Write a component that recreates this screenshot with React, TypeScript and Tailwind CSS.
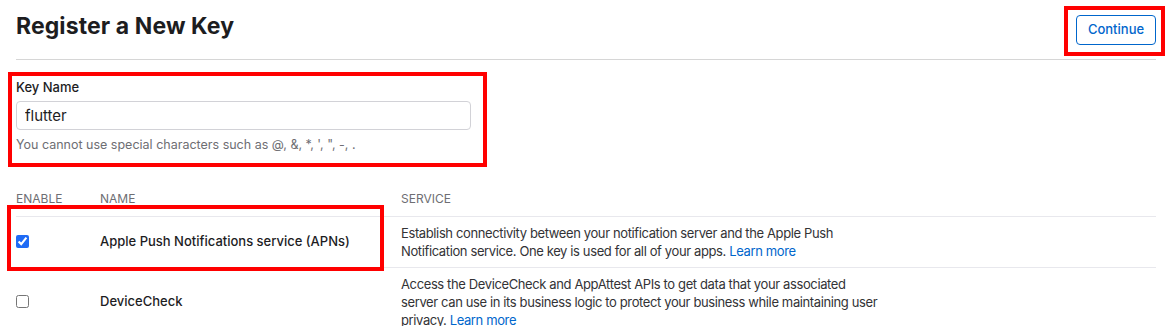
import { useState } from 'react';

const services = [
  {
    id: 'apns',
    name: 'Apple Push Notifications service (APNs)',
    description: 'Establish connectivity between your notification server and the Apple Push Notification service. One key is used for all of your apps.',
    enabled: true,
  },
  {
    id: 'devicecheck',
    name: 'DeviceCheck',
    description: 'Access the DeviceCheck and AppAttest APIs to get data that your associated server can use in its business logic to protect your business while maintaining user privacy.',
    enabled: false,
  },
];

export default function App() {
  const [keyName, setKeyName] = useState('flutter');
  const [enabled, setEnabled] = useState<Record<string, boolean>>(
    Object.fromEntries(services.map(s => [s.id, s.enabled]))
  );

  return (
    <div className="relative w-[1172px] h-[326px] overflow-hidden bg-white px-4 font-['Inter','Liberation_Sans',sans-serif] text-[#1d1d1f]">
      {/* Header */}
      <div className="flex justify-between items-start h-[59px] border-b border-[#d6d6d6] box-content">
        <h1 className="pt-[12px] text-[23px] leading-[28px] font-bold tracking-[0.1px]">Register a New Key</h1>
        <button className="mt-[15px] h-[30px] w-[80px] rounded-[4px] border border-[#0066cc] text-[13px] font-medium text-[#0066cc]">
          Continue
        </button>
      </div>

      {/* Key name */}
      <div className="pt-[19px]">
        <label className="block text-[13px] leading-[16px] font-medium">Key Name</label>
        <input
          value={keyName}
          onChange={e => setKeyName(e.target.value)}
          className="mt-[6px] block h-[29px] w-[455px] rounded-[4px] border border-[#d2d2d7] px-[8px] text-[15px] outline-none"
        />
        <p className="mt-[7px] text-[12.5px] leading-[16px] text-[#6e6e73]">
          You cannot use special characters such as @, &amp;, *, ', ", -, .
        </p>
      </div>

      {/* Services table */}
      <div className="mt-[38px]">
        <div className="grid grid-cols-[84px_301px_1fr] pb-[9px] text-[12px] leading-[16px] uppercase text-[#6e6e73] border-b border-[#e8e8ed]">
          <div>Enable</div>
          <div>Name</div>
          <div>Service</div>
        </div>
        {services.map(s => (
          <div key={s.id} className="grid grid-cols-[84px_301px_1fr] items-center border-b border-[#e8e8ed] py-[7px]">
            <div className="flex items-center">
              <input
                type="checkbox"
                checked={enabled[s.id]}
                onChange={e => setEnabled({ ...enabled, [s.id]: e.target.checked })}
                className="m-0 h-[13px] w-[13px] accent-[#1f6bf5] -translate-y-[1px]"
              />
            </div>
            <div className="text-[13px] font-medium">{s.name}</div>
            <p className="w-[481px] text-[13px] leading-[18px] tracking-[-0.38px] text-[#333336]">
              {s.description} <a href="#" className="text-[#0066cc]">Learn more</a>
            </p>
          </div>
        ))}
      </div>

      {/* Annotation boxes */}
      <div className="absolute left-[1064px] top-[6px] w-[101px] h-[50px] border-4 border-[#ff0000]" />
      <div className="absolute left-[8px] top-[72px] w-[479px] h-[95px] border-4 border-[#ff0000]" />
      <div className="absolute left-[7px] top-[205px] w-[377px] h-[66px] border-4 border-[#ff0000]" />
    </div>
  );
}
